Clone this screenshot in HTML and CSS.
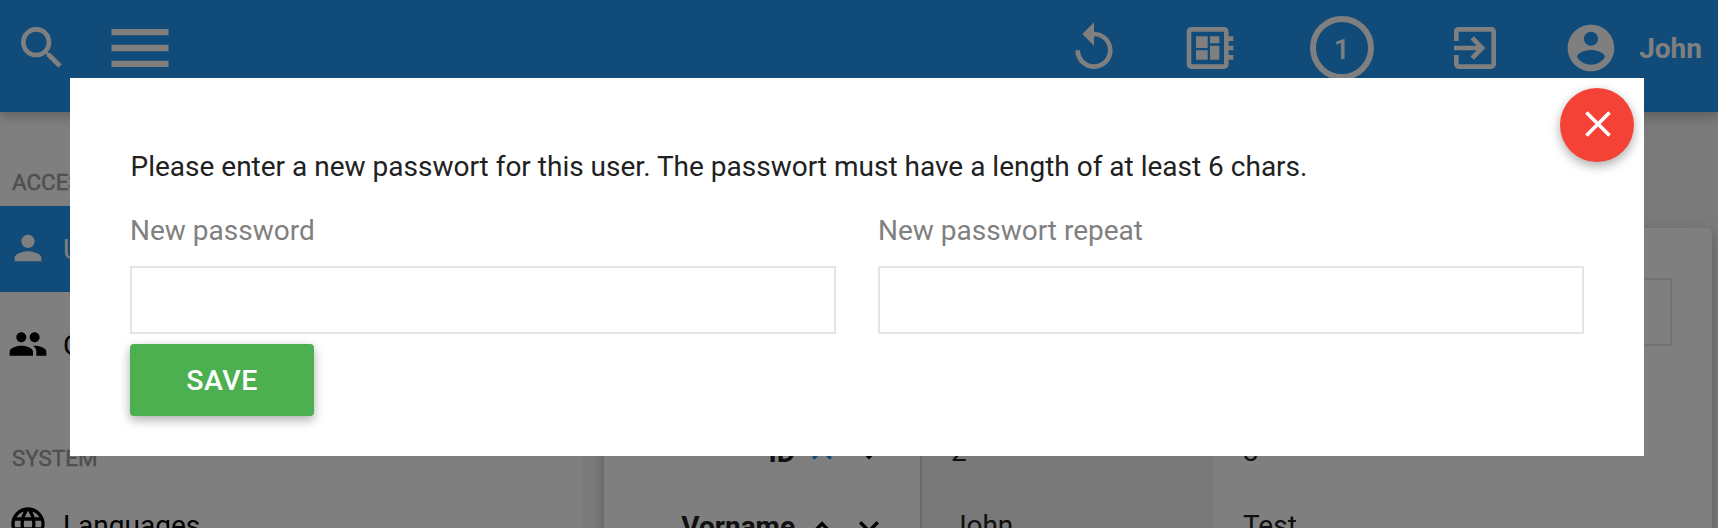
FILE: index.html
```html
<!DOCTYPE html>
<html lang="en">
<head>
<meta charset="utf-8">
<title>User administration</title>
<link rel="stylesheet" href="styles.css">
</head>
<body>
<header class="topbar">
  <div class="topbar-left">
    <svg class="icon icon-lg" viewBox="0 0 24 24"><path d="M15.5 14h-.79l-.28-.27A6.471 6.471 0 0 0 16 9.5 6.5 6.5 0 1 0 9.5 16c1.61 0 3.09-.59 4.23-1.57l.27.28v.79l5 4.99L20.49 19l-4.99-5zm-6 0C7.01 14 5 11.99 5 9.5S7.01 5 9.5 5 14 7.01 14 9.5 11.99 14 9.5 14z"/></svg>
    <svg class="icon icon-menu" viewBox="0 0 24 24"><path d="M3 18h18v-2H3v2zm0-5h18v-2H3v2zm0-7v2h18V6H3z"/></svg>
  </div>
  <div class="topbar-right">
    <svg class="icon icon-lg" viewBox="0 0 24 24"><path d="M12 5V1L7 6l5 5V7c3.31 0 6 2.69 6 6s-2.69 6-6 6-6-2.69-6-6H4c0 4.42 3.58 8 8 8s8-3.58 8-8-3.58-8-8-8z"/></svg>
    <svg class="icon icon-lg icon-board" viewBox="0 0 24 24"><path d="M22 9V7h-2V5c0-1.100-.9-2-2-2H4c-1.100 0-2 .9-2 2v14c0 1.100.9 2 2 2h14c1.100 0 2-.9 2-2v-2h2v-2h-2v-2h2v-2h-2V9h2zm-4 10H4V5h14v14zM6 13h5v4H6zm6-6h4v3h-4zM6 7h5v5H6zm6 4h4v6h-4z"/></svg>
    <span class="counter">1</span>
    <svg class="icon icon-lg icon-exit" viewBox="0 0 24 24"><path d="M10.090 15.590L11.500 17l5-5-5-5-1.410 1.410L12.670 11H3v2h9.670l-2.580 2.590zM19 3H5c-1.110 0-2 .9-2 2v4h2V5h14v14H5v-4H3v4c0 1.100.89 2 2 2h14c1.100 0 2-.9 2-2V5c0-1.100-.9-2-2-2z"/></svg>
    <svg class="icon icon-lg icon-account" viewBox="0 0 24 24"><path d="M12 2C6.480 2 2 6.480 2 12s4.480 10 10 10 10-4.480 10-10S17.520 2 12 2zm0 3c1.660 0 3 1.340 3 3s-1.340 3-3 3-3-1.340-3-3 1.340-3 3-3zm0 14.200c-2.500 0-4.710-1.280-6-3.220.03-1.990 4-3.080 6-3.080 1.990 0 5.970 1.090 6 3.080-1.290 1.940-3.500 3.220-6 3.220z"/></svg>
    <span class="username">John</span>
  </div>
</header>

<div class="layout">
  <nav class="sidebar">
    <h2 class="nav-title">ACCESS</h2>
    <a class="nav-item active"><svg class="icon icon-sm" viewBox="0 0 24 24"><path d="M12 12c2.210 0 4-1.790 4-4s-1.790-4-4-4-4 1.790-4 4 1.790 4 4 4zm0 2c-2.670 0-8 1.340-8 4v2h16v-2c0-2.660-5.330-4-8-4z"/></svg><span class="nav-text">Users</span></a>
    <a class="nav-item"><svg class="icon icon-sm" viewBox="0 0 24 24"><path d="M16 11c1.660 0 2.990-1.340 2.990-3S17.660 5 16 5c-1.660 0-3 1.340-3 3s1.340 3 3 3zm-8 0c1.660 0 2.990-1.340 2.990-3S9.660 5 8 5C6.340 5 5 6.340 5 8s1.340 3 3 3zm0 2c-2.330 0-7 1.170-7 3.500V19h14v-2.500c0-2.330-4.670-3.500-7-3.500zm8 0c-.29 0-.62.02-.97.05 1.160.84 1.970 1.970 1.970 3.450V19h6v-2.500c0-2.330-4.670-3.500-7-3.500z"/></svg><span class="nav-text">Groups</span></a>
    <h2 class="nav-title">SYSTEM</h2>
    <a class="nav-item"><svg class="icon icon-sm" viewBox="0 0 24 24"><path d="M11.990 2C6.470 2 2 6.480 2 12s4.470 10 9.990 10C17.520 22 22 17.520 22 12S17.520 2 11.990 2zm6.930 6h-2.950c-.32-1.250-.78-2.450-1.380-3.560 1.840.63 3.370 1.910 4.330 3.560zM12 4.040c.83 1.200 1.480 2.530 1.910 3.960h-3.820c.43-1.430 1.080-2.760 1.910-3.960zM4.260 14C4.100 13.360 4 12.690 4 12s.1-1.360.26-2h3.380c-.08.66-.14 1.320-.14 2 0 .68.06 1.340.14 2H4.260zm.82 2h2.950c.32 1.250.78 2.450 1.380 3.560-1.840-.63-3.370-1.900-4.330-3.560zm2.950-8H5.080c.96-1.660 2.490-2.930 4.330-3.560C8.810 5.550 8.350 6.750 8.030 8zM12 19.960c-.83-1.200-1.480-2.530-1.910-3.960h3.820c-.43 1.430-1.080 2.760-1.910 3.960zM14.340 14H9.660c-.09-.66-.16-1.320-.16-2 0-.68.07-1.350.16-2h4.680c.09.65.16 1.320.16 2 0 .68-.07 1.340-.16 2zm.25 5.560c.6-1.110 1.060-2.310 1.380-3.560h2.950c-.96 1.650-2.490 2.930-4.330 3.560zM16.360 14c.08-.66.14-1.320.14-2 0-.68-.06-1.340-.14-2h3.380c.16.64.26 1.310.26 2s-.1 1.360-.26 2h-3.380z"/></svg><span class="nav-text">Languages</span></a>
  </nav>
  <main class="content">
    <section class="card">
      <div class="filter"></div>
      <div class="grid">
        <div class="row">
          <div class="label"><span class="label-text">ID</span>
            <svg class="sort on" viewBox="0 0 24 24"><path d="M7.410 15.410L12 10.830l4.590 4.580L18 14l-6-6-6 6z"/></svg>
            <svg class="sort" viewBox="0 0 24 24"><path d="M7.410 7.840L12 12.420l4.590-4.580L18 9.250l-6 6-6-6z"/></svg>
          </div>
          <div class="cell first">2</div>
          <div class="cell">3</div>
        </div>
        <div class="row">
          <div class="label"><span class="label-text">Vorname</span>
            <svg class="sort" viewBox="0 0 24 24"><path d="M7.410 15.410L12 10.830l4.590 4.580L18 14l-6-6-6 6z"/></svg>
            <svg class="sort" viewBox="0 0 24 24"><path d="M7.410 7.840L12 12.420l4.590-4.580L18 9.250l-6 6-6-6z"/></svg>
          </div>
          <div class="cell first">John</div>
          <div class="cell">Test</div>
        </div>
      </div>
    </section>
  </main>
</div>

<div class="overlay">
  <form class="modal">
    <button class="close" type="button" aria-label="Close"><svg class="icon icon-close" viewBox="0 0 24 24"><path d="M19 6.410L17.590 5 12 10.590 6.410 5 5 6.410 10.590 12 5 17.590 6.410 19 12 13.410 17.590 19 19 17.590 13.410 12z"/></svg></button>
    <p class="message">Please enter a new passwort for this user. The passwort must have a length of at least 6 chars.</p>
    <div class="fields">
      <label class="field"><span>New password</span><input type="password"></label>
      <label class="field"><span>New passwort repeat</span><input type="password"></label>
    </div>
    <button class="save" type="button">SAVE</button>
  </form>
</div>
</body>
</html>
```
FILE: styles.css
```css
* { box-sizing: border-box; }
body {
  margin: 0;
  height: 528px;
  overflow: hidden;
  background: #f5f5f5;
  color: #212121;
  font: 28px/40px Roboto, sans-serif;
}
.icon { display: block; flex: none; fill: currentColor; }
.icon-lg { width: 56px; height: 56px; }
.icon-menu { width: 76px; height: 76px; margin-left: 32px; }
.icon-sm { width: 40px; height: 40px; margin-bottom: 2px; }
.icon-board { margin-left: 60px; }
.icon-exit { margin-left: 73px; }
.icon-account { margin-left: 60.5px; }
.icon-close { width: 44px; height: 44px; }

.topbar {
  position: relative;
  z-index: 1;
  display: flex;
  justify-content: space-between;
  height: 112px;
  padding: 10px 16px 0 14px;
  background: #2196f3;
  color: #fff;
  box-shadow: 0 4px 10px rgba(0, 0, 0, .16), 0 4px 14px rgba(0, 0, 0, .1);
}
.topbar-left, .topbar-right { display: flex; align-items: center; height: 76px; }
.counter {
  width: 64px;
  height: 64px;
  margin-left: 71.5px;
  border: 6px solid #fff;
  border-radius: 50%;
  font-weight: 500;
  line-height: 55px;
  text-align: center;
}
.username { margin-left: 20px; padding-top: 2px; font-weight: 700; }

.layout { display: flex; height: 416px; overflow: hidden; }
.sidebar { width: 582px; padding-top: 50px; background: #fff; color: #000; }
.nav-title {
  margin: 0 0 4px 12px;
  color: #9e9e9e;
  font-size: 22.4px;
  font-weight: 400;
  line-height: 40px;
  -webkit-text-stroke: .5px currentColor;
}
.nav-item { display: flex; align-items: center; gap: 15px; height: 86px; padding-left: 8px; margin-bottom: 10px; }
.nav-item + .nav-title { margin-top: 50px; }
.nav-item.active { background: #2196f3; color: #fff; }
.nav-text { padding-top: 2px; }

.content { flex: 1; padding: 116px 6px 0 22px; }
.card {
  height: 400px;
  padding-top: 50px;
  border-radius: 5px;
  background: #fff;
  box-shadow: 0 4px 10px rgba(0, 0, 0, .16), 0 4px 20px rgba(0, 0, 0, .12);
}
.filter { height: 68px; margin: 0 40px 71px; border: 2px solid #e4e4e4; }
.row { display: grid; grid-template-columns: 318px 292px 1fr; height: 74px; }
.label {
  display: flex;
  align-items: center;
  justify-content: flex-end;
  padding-right: 31px;
  border-right: 2px solid #d0d0d0;
  font-weight: 700;
}
.label-text { padding-bottom: 3px; }
.sort { width: 40px; height: 40px; margin-left: 7px; }
.sort.on { fill: #2196f3; }
.cell { padding: 15px 29px; }
.cell.first { background: #f0f0f0; }

.overlay {
  position: absolute;
  inset: 0;
  z-index: 2;
  padding: 78px 74px 0 70px;
  background: rgba(0, 0, 0, .5);
}
.modal { position: relative; height: 378px; padding: 69px 60px 0; background: #fff; }
.message { margin: 0; text-indent: .5px; }
.fields { display: grid; grid-template-columns: 1fr 1fr; gap: 42px; margin-top: 24px; }
.field { color: #808080; }
.field input {
  display: block;
  width: 100%;
  height: 68px;
  margin-top: 15px;
  border: 2px solid #e5e5e5;
  background: #fff;
}
.save {
  display: block;
  width: 184px;
  height: 72px;
  margin-top: 10px;
  padding: 0;
  border: 0;
  border-radius: 4px;
  background: #4caf50;
  color: #fff;
  font: 500 28.5px Roboto, sans-serif;
  letter-spacing: .5px;
  box-shadow: 0 4px 10px rgba(0, 0, 0, .22), 0 4px 14px rgba(0, 0, 0, .12);
}
.close {
  position: absolute;
  top: 10px;
  right: 10px;
  display: flex;
  align-items: center;
  justify-content: center;
  width: 74px;
  height: 74px;
  padding: 0 0 2px 2px;
  border: 0;
  border-radius: 50%;
  background: #f44336;
  color: #fff;
  box-shadow: 0 4px 10px rgba(0, 0, 0, .22), 0 4px 14px rgba(0, 0, 0, .12);
}
```
